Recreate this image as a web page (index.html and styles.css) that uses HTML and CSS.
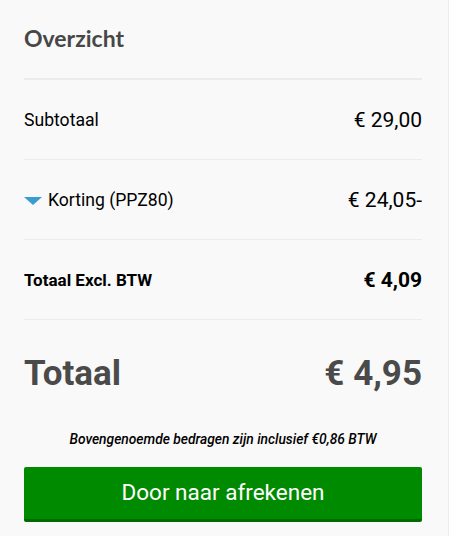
FILE: index.html
```html
<!DOCTYPE html>
<html lang="nl">
<head>
<meta charset="utf-8">
<title>Overzicht</title>
<link rel="stylesheet" href="styles.css">
</head>
<body>
<aside class="summary">
  <h2 class="summary-title">Overzicht</h2>
  <div class="row">
    <span class="label">Subtotaal</span>
    <span class="amount">€ 29,00</span>
  </div>
  <div class="row">
    <span class="label discount">
      <svg class="caret" width="18" height="8" viewBox="0 0 18 8" aria-hidden="true"><polygon points="0,0 18,0 9,8" fill="#3d9bd3"/></svg>
      Korting (PPZ80)
    </span>
    <span class="amount">€ 24,05-</span>
  </div>
  <div class="row row-strong">
    <span class="label">Totaal Excl. BTW</span>
    <span class="amount">€ 4,09</span>
  </div>
  <div class="total">
    <span>Totaal</span>
    <span>€ 4,95</span>
  </div>
  <p class="vat-note">Bovengenoemde bedragen zijn inclusief €0,86 BTW</p>
  <button class="checkout" type="button">Door naar afrekenen</button>
</aside>
</body>
</html>
```

FILE: styles.css
```css
* { box-sizing: border-box; }
html, body { margin: 0; padding: 0; }
body {
  background: #ffffff;
  font-family: Roboto, "Liberation Sans", Arial, sans-serif;
  color: #000;
}
.summary {
  width: 449px;
  min-height: 100vh;
  background: #f9f9f9;
  border-right: 1px solid #ececec;
  padding: 0 26px 0 24px;
}
.summary-title {
  margin: 0;
  padding: 25px 0 27px;
  font-family: Lato, "Open Sans", sans-serif;
  font-weight: 700;
  font-size: 23px;
  line-height: 26px;
  color: #474747;
  border-bottom: 2px solid #ececec;
}
.row {
  height: 80px;
  display: flex;
  align-items: center;
  justify-content: space-between;
  border-bottom: 1px solid #ececec;
}
.label {
  font-size: 17.6px;
  line-height: 24px;
}
.discount {
  display: flex;
  align-items: center;
  gap: 6px;
}
.caret { display: block; margin-top: 2px; }
.amount {
  font-size: 21px;
  line-height: 24px;
}
.row-strong .label { font-weight: 700; font-size: 17px; }
.row-strong .amount { font-weight: 700; }
.total {
  display: flex;
  justify-content: space-between;
  padding-top: 36px;
  font-size: 35px;
  line-height: 36px;
  font-weight: 700;
  color: #4a4a4a;
}
.vat-note {
  margin: 37px 0 0;
  text-align: center;
  font-style: italic;
  font-weight: 500;
  font-size: 13.8px;
  line-height: 20px;
  color: #000;
}
.checkout {
  display: block;
  width: 100%;
  margin-top: 18px;
  height: 55px;
  padding: 0 0 2px;
  border: 0;
  border-bottom: 3px solid #006a00;
  border-radius: 2px;
  background: #008a00;
  color: #fff;
  font-family: Roboto, "Liberation Sans", Arial, sans-serif;
  font-size: 22.5px;
  cursor: pointer;
}
```
